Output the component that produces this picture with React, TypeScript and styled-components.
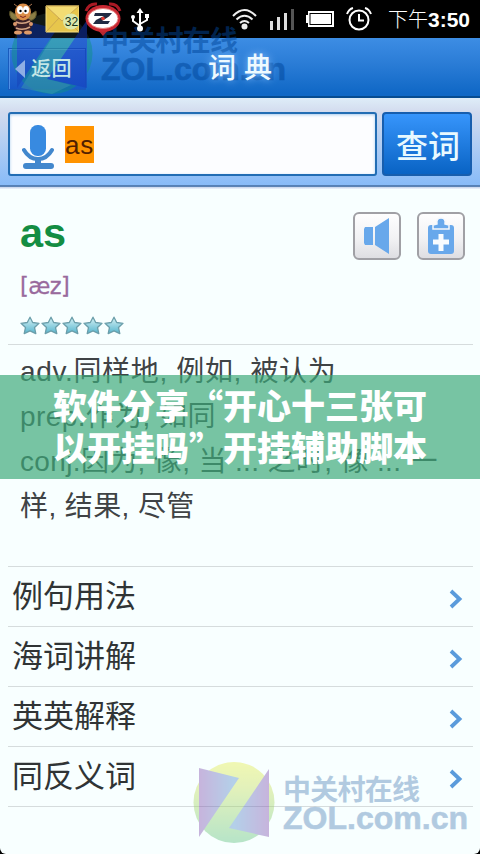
import React from "react";
import styled, { createGlobalStyle, css } from "styled-components";

const cjk = '"Noto Sans CJK SC", sans-serif';
const latin = '"Liberation Sans", "Noto Sans CJK SC", sans-serif';

const GlobalStyle = createGlobalStyle`
  * { box-sizing: border-box; }
  body { margin: 0; background: #000; }
  svg { display: block; flex: none; }
`;

const Screen = styled.main`
  position: relative;
  display: flex;
  flex-direction: column;
  width: 480px;
  height: 854px;
  overflow: hidden;
  background: #000;
  font-family: ${cjk};
  white-space: nowrap;
`;

const StatusBar = styled.header`
  display: flex;
  align-items: center;
  justify-content: space-between;
  height: 38px;
  flex: none;
  padding: 0 8px 0 9px;
  background: #000;
`;

const StatusLayer = styled.div`
  position: relative;
  z-index: 2;
`;

const Icons = styled.div<{ $gap: number }>`
  display: flex;
  align-items: center;
  gap: ${(p) => p.$gap}px;
`;

const UsbSlot = styled.div`
  padding: 2px 0 0 3px;
`;

const Clock = styled.span`
  width: 84px;
  margin-left: 4px;
  color: #fff;
  font: 700 21px/38px ${latin};
`;

const Meridiem = styled.span`
  font: 300 20px/38px ${cjk};
`;

const TitleBar = styled.div`
  display: flex;
  align-items: center;
  height: 60px;
  flex: none;
  padding: 2px 8px 0;
  background: linear-gradient(#3d8de4, #2a7cd6 45%, #1068c6 95%);
  border-bottom: 2px solid #064c91;
`;

const BackButton = styled.button`
  display: flex;
  align-items: center;
  gap: 6px;
  width: 78px;
  height: 42px;
  padding: 0 0 0 6px;
  margin-top: 1px;
  border: 1px solid #195bbd;
  box-shadow: inset 1px 1px 0 #5090e6;
  background: linear-gradient(#3277dc, #1757c7);
  font: 500 20px/40px ${cjk};
`;

const BackLabel = styled.span`
  position: relative;
  z-index: 2;
  margin-top: -1px;
  color: #c4e6e6;
  letter-spacing: 0.5px;
`;

const BackArrow = styled.span`
  position: relative;
  z-index: 2;
`;

const Title = styled.h1`
  position: relative;
  z-index: 2;
  margin: -4px 0 0 122px;
  color: #eefaff;
  font: 500 28px/50px ${cjk};
  letter-spacing: 8px;
  text-shadow: 0 0 8px #8cc3ff;
`;

const SearchBar = styled.div`
  display: flex;
  gap: 5px;
  height: 91px;
  flex: none;
  padding: 14px 8px 0;
  background: linear-gradient(#deedf8 0, #d3dbee 14px, #b2cef3 45px, #88bbf8 87px, #5380b7 87px, #5f85b5 89px, #c7d2e8 89px, #eef5fd);
`;

const SearchField = styled.label`
  display: flex;
  align-items: flex-start;
  width: 369px;
  height: 64px;
  padding: 11px 0 0 12px;
  border: 2px solid #226db4;
  border-radius: 3px;
  background: #fcfdff;
  box-shadow: inset 0 1px 3px #a9cbed;
`;

const Query = styled.mark`
  height: 37px;
  margin: 1px 0 0 10px;
  background: #ff9300;
  color: #512000;
  font: 26px/38px ${latin};
  letter-spacing: 0.7px;
`;

const SearchButton = styled.button`
  width: 90px;
  height: 64px;
  padding: 0 0 0 2px;
  border: 2px solid #175eae;
  border-radius: 4px;
  background: linear-gradient(#3795fb, #0963c4);
  color: #e8f9ff;
  font: 500 32px/58px ${cjk};
`;

const Content = styled.section`
  display: flex;
  flex-direction: column;
  height: 665px;
  padding: 0 7px 0 8px;
  background: #f8ffff;
  border-radius: 0 0 6px 6px;
`;

const Entry = styled.div`
  display: flex;
  justify-content: space-between;
  height: 156px;
  padding: 17px 8px 0 12px;
  border-bottom: 1px solid #d6dcdd;
`;

const WordInfo = styled.div`
  display: flex;
  flex-direction: column;
`;

const Word = styled.h2`
  margin: 4px 0 0;
  color: #148d43;
  font: 700 41.5px/46px ${latin};
`;

const Phonetic = styled.div`
  height: 28px;
  margin-top: 16px;
  color: #996a9d;
  font: 22.5px/28px "DejaVu Sans", sans-serif;
  letter-spacing: -0.6px;
  -webkit-text-stroke: 0.3px #996a9d;
`;

const Stars = styled.div`
  display: flex;
  gap: 1px;
  margin-top: 16px;
`;

const Actions = styled.div`
  display: flex;
  gap: 16px;
  padding-top: 6px;
`;

const ActionButton = styled.button`
  display: flex;
  align-items: center;
  justify-content: center;
  width: 48px;
  height: 48px;
  padding: 0;
  border: 2px solid #a0a0a5;
  border-radius: 6px;
  background: linear-gradient(#fefefe, #f2f2f4 55%, #dedee2);
`;

const Definitions = styled.div`
  height: 222px;
  padding: 4px 0 0 12px;
  border-bottom: 1px solid #d6dcdd;
`;

const Definition = styled.p<{ $spacing: number }>`
  margin: 0;
  height: 45px;
  color: #3f4345;
  font: 28px/45px ${latin};
  letter-spacing: ${(p) => p.$spacing}px;
`;

const SectionRow = styled.a`
  display: flex;
  align-items: center;
  justify-content: space-between;
  height: 60px;
  padding: 0 10px 0 4px;
  border-bottom: 1px solid #d6dcdd;
  color: #303435;
  font: 31px/54px ${cjk};
`;

const RowLabel = styled.span`
  margin-top: -5px;
`;

const RowArrow = styled.span`
  margin-top: 4px;
`;

const Banner = styled.div`
  position: absolute;
  z-index: 3;
  top: 375px;
  left: 0;
  width: 480px;
  height: 104px;
  padding: 9px 53px;
  background: rgba(61, 170, 122, 0.69);
  color: #fff;
  font: 900 34px/42px ${cjk};
`;

const BannerLine = styled.div`
  height: 42px;
`;

const Watermark = styled.div<{ $place: "top" | "bottom" }>`
  position: absolute;
  z-index: 1;
  pointer-events: none;
  ${(p) =>
    p.$place === "top"
      ? css`left: 11px; top: 11px; opacity: 0.5;`
      : css`left: 193px; top: 760px; opacity: 0.4;`}
`;

function Brand({ dark }: { dark?: boolean }) {
  const id = dark ? "dark" : "light";
  const ink = dark ? "#00469a" : "#487cb4";
  return (
    <svg width="280" height="86" viewBox="0 0 280 86">
      <defs>
        <linearGradient id={`disc-${id}`} x1="0" y1="0" x2="0" y2="1">
          <stop stopColor={dark ? "#20302c" : "#e6ee42"} />
          <stop offset=".31" stopColor={dark ? "#20302c" : "#c5de55"} />
          <stop offset=".32" stopColor={dark ? "#108e88" : "#c4de55"} />
          <stop offset="1" stopColor={dark ? "#108e88" : "#55bd78"} />
        </linearGradient>
        <linearGradient id={`wing-${id}`}>
          <stop stopColor={dark ? "#1742b8" : "#7f46aa"} />
          <stop offset=".5" stopColor={dark ? "#1844be" : "#4e8cca"} />
          <stop offset="1" stopColor={dark ? "#173cc0" : "#7f46aa"} />
        </linearGradient>
      </defs>
      <circle cx="41" cy="42.5" r="40.5" fill={`url(#disc-${id})`} />
      <path d="M6 8 46 18 6 77ZM76 9V77L36 68Z" fill={`url(#wing-${id})`} />
      {dark && <path d="M41 27H64L36 68 60 74 41 83 10 77Z" fill="#4dc096" opacity=".65" />}
      <text x="90" y="40" textLength="137" fill={ink} fontFamily="Noto Sans CJK SC" fontSize="28" fontWeight="700">中关村在线</text>
      <text x="90" y="69" textLength="185" lengthAdjust="spacingAndGlyphs" fill={ink} fontFamily="Liberation Sans" fontSize="31" fontWeight="700" stroke={ink} strokeWidth=".6">ZOL.com.cn</text>
    </svg>
  );
}

const Bee = () => (
  <svg width="28" height="32" viewBox="0 0 28 32">
    <path d="M9 13 1 8Q-1 17 9 18M19 13 27 8Q29 17 19 18" fill="#8b7e45" stroke="#5e562b" />
    <path d="M9 4 5 1M19 4 23 1" stroke="#a87550" />
    <ellipse cx="14" cy="22" rx="9" ry="8" fill="#3b2027" />
    <path d="M7 19Q14 22 21 18M7 25Q14 28 21 24" stroke="#d6a483" strokeWidth="1.500" fill="none" />
    <ellipse cx="14" cy="9" rx="8" ry="8.500" fill="#db8e48" />
    <ellipse cx="11" cy="7" rx="3" ry="4" fill="#fff" /><ellipse cx="17" cy="7" rx="3" ry="4" fill="#fff" />
    <circle cx="11.500" cy="8" r="1.200" /><circle cx="16.500" cy="8" r="1.200" />
    <path d="M11 13Q14 16 17 13" stroke="#7d2020" fill="none" />
    <ellipse cx="9" cy="29.500" rx="4" ry="2" fill="#dd9a69" /><ellipse cx="19" cy="29.500" rx="4" ry="2" fill="#dd9a69" />
    <circle cx="6" cy="21" r="2" fill="#d9976b" /><circle cx="22" cy="21" r="2" fill="#d9976b" />
  </svg>
);

const Mail = () => (
  <svg width="37" height="30" viewBox="0 0 37 30">
    <path d="M4 2H37V28H4Z" fill="#e7c64c" stroke="#f7df83" />
    <path d="M4 2 20 17 37 2ZM4 28 17 14M37 28 23 14" fill="#f3dc73" stroke="#cda850" />
    <circle cx="29" cy="17.500" r="8" fill="#dce9ae" />
    <text x="29.500" y="21.500" textAnchor="middle" fontFamily="Liberation Sans" fontSize="12" fill="#173316">32</text>
  </svg>
);

const RedAlarm = () => (
  <svg width="38" height="36" viewBox="0 0 38 36">
    <path d="M2 10Q5 2 13 3M25 3Q33 2 36 10" fill="none" stroke="#a91924" strokeWidth="3" />
    <path d="M13 28 19 35 26 27Z" fill="#b62830" />
    <ellipse cx="19" cy="17.500" rx="17.500" ry="13.500" fill="#c92832" />
    <ellipse cx="19" cy="17.500" rx="15" ry="10" fill="#fff" stroke="#e88580" />
    <path d="M11 12H28L25 15.500 18 20H26L24 23H9L12 19 20 15H10Z" fill="#202a42" />
    <circle cx="19" cy="17.500" r="1.800" fill="#e33830" />
  </svg>
);

const Usb = () => (
  <svg width="20" height="24" viewBox="0 0 20 24" fill="none" stroke="#fff" strokeWidth="2">
    <path d="M10 3V20M10 18 3 13V9M10 16 17 12V8" />
    <path d="M6.500 5 10 0 13.500 5Z" fill="#fff" stroke="none" />
    <circle cx="10" cy="20.500" r="3" fill="#fff" stroke="none" />
    <circle cx="3" cy="9" r="2" fill="#fff" stroke="none" /><path d="M15 6H19V10H15Z" fill="#fff" stroke="none" />
  </svg>
);

const Wifi = () => (
  <svg width="25" height="22" viewBox="0 0 25 22" fill="none" stroke="#eee" strokeWidth="2">
    <path d="M1 8Q12.500-4 24 8M4.500 11.500Q12.500 4 20.500 11.500M8 15Q12.500 11 17 15" />
    <circle cx="12.500" cy="18.500" r="3" fill="#eee" stroke="none" />
  </svg>
);

const Signal = () => (
  <svg width="25" height="22" viewBox="0 0 25 22">
    <path d="M1 13H4V22H1ZM8 9H11V22H8ZM15 5H18V22H15Z" fill="#ddd" />
    <path d="M22 1H25V22H22Z" fill="#555" />
  </svg>
);

const Battery = () => (
  <svg width="28" height="16" viewBox="0 0 28 16">
    <path d="M2 0H28V16H2V12H0V4H2Z" fill="#fff" /><rect x="4" y="2.500" width="21.500" height="11" fill="#fff" stroke="#000" />
  </svg>
);

const Alarm = () => (
  <svg width="26" height="24" viewBox="0 0 26 24" fill="none" stroke="#fff" strokeWidth="2">
    <circle cx="13" cy="13" r="9.500" /><path d="M13 7V13.500H18M1 7Q3 2 7 1M25 7Q23 2 19 1" />
  </svg>
);

const Star = () => (
  <svg width="20" height="19" viewBox="0 0 20 19">
    <defs><linearGradient id="star" x2="0" y2="1"><stop stopColor="#d8f2f5" /><stop offset="1" stopColor="#55b5cd" /></linearGradient></defs>
    <path d="M10 1.200 12.700 6.500 19 7.300 14.500 11.500 15.800 17.600 10 14.900 4.200 17.600 5.500 11.500 1 7.300 7.300 6.500Z" fill="url(#star)" stroke="#6b9eaa" strokeWidth="1.300" strokeLinejoin="round" />
  </svg>
);

const Microphone = () => (
  <svg width="33" height="46" viewBox="0 0 33 46">
    <rect x="8" y="0" width="16" height="31" rx="7.500" fill="#388ae0" />
    <path d="M2 25Q7 34 16 34T30 25" fill="none" stroke="#4287cd" strokeWidth="4" strokeLinecap="round" />
    <path d="M16 33V40" stroke="#4287cd" strokeWidth="6" />
    <rect x="1" y="38" width="31" height="6" rx="3" fill="#4287cd" />
  </svg>
);

const Chevron = () => (
  <svg width="14" height="20" viewBox="0 0 14 20" fill="none">
    <path d="M2 2 10.500 10 2 18" stroke="#5b9bdb" strokeWidth="3.800" />
  </svg>
);

const definitions = [
  { text: "adv.同样地, 例如, 被认为", spacing: 0.65 },
  { text: "prep.作为, 如同", spacing: 0.4 },
  { text: "conj.因为, 像, 当 ... 之时, 像 ... 一", spacing: 0.35 },
  { text: "样, 结果, 尽管", spacing: 0.4 },
];

const sections = ["例句用法", "海词讲解", "英英解释", "同反义词"];

export default function App() {
  return (
    <>
      <GlobalStyle />
      <Screen>
        <StatusBar>
          <StatusLayer>
            <Icons $gap={5}><Bee /><Mail /><RedAlarm /><UsbSlot><Usb /></UsbSlot></Icons>
          </StatusLayer>
          <Icons $gap={12}><Wifi /><Signal /><Battery /><Alarm /><Clock><Meridiem>下午</Meridiem>3:50</Clock></Icons>
        </StatusBar>
        <TitleBar>
          <BackButton>
            <BackArrow><svg width="10" height="20" viewBox="0 0 10 20"><path d="M10 1V19L0 10Z" fill="#8faee4" /></svg></BackArrow>
            <BackLabel>返回</BackLabel>
          </BackButton>
          <Title>词典</Title>
        </TitleBar>
        <SearchBar>
          <SearchField><Microphone /><Query>as</Query></SearchField>
          <SearchButton>查词</SearchButton>
        </SearchBar>
        <Content>
          <Entry>
            <WordInfo>
              <Word>as</Word>
              <Phonetic>[æz]</Phonetic>
              <Stars>{[1, 2, 3, 4, 5].map((n) => <Star key={n} />)}</Stars>
            </WordInfo>
            <Actions>
              <ActionButton aria-label="发音">
                <svg width="28" height="38" viewBox="0 0 28 38" fill="#68a8eb"><path d="M2 10H10V28H2L1 26V12ZM12 10 26 1V37L12 28Z" /></svg>
              </ActionButton>
              <ActionButton aria-label="添加生词">
                <svg width="28" height="38" viewBox="0 0 28 38"><rect x="1" y="8" width="26" height="29" rx="3" fill="#68a8eb" /><path d="M6 12V8L10 7Q9 1 14 1T18 7L22 8V12Z" fill="#68a8eb" stroke="#f5f8fc" strokeWidth="1.500" /><path d="M11.500 17H16.500V22.500H22V27.500H16.500V34H11.500V27.500H6V22.500H11.500Z" fill="#f8fcff" /></svg>
              </ActionButton>
            </Actions>
          </Entry>
          <Definitions>
            {definitions.map((d) => (
              <Definition key={d.text} $spacing={d.spacing}>{d.text}</Definition>
            ))}
          </Definitions>
          {sections.map((label) => (
            <SectionRow key={label}><RowLabel>{label}</RowLabel><RowArrow><Chevron /></RowArrow></SectionRow>
          ))}
        </Content>
        <Watermark $place="top"><Brand dark /></Watermark>
        <Watermark $place="bottom"><Brand /></Watermark>
        <Banner>
          <BannerLine>软件分享“开心十三张可</BannerLine>
          <BannerLine>以开挂吗”开挂辅助脚本</BannerLine>
        </Banner>
      </Screen>
    </>
  );
}
